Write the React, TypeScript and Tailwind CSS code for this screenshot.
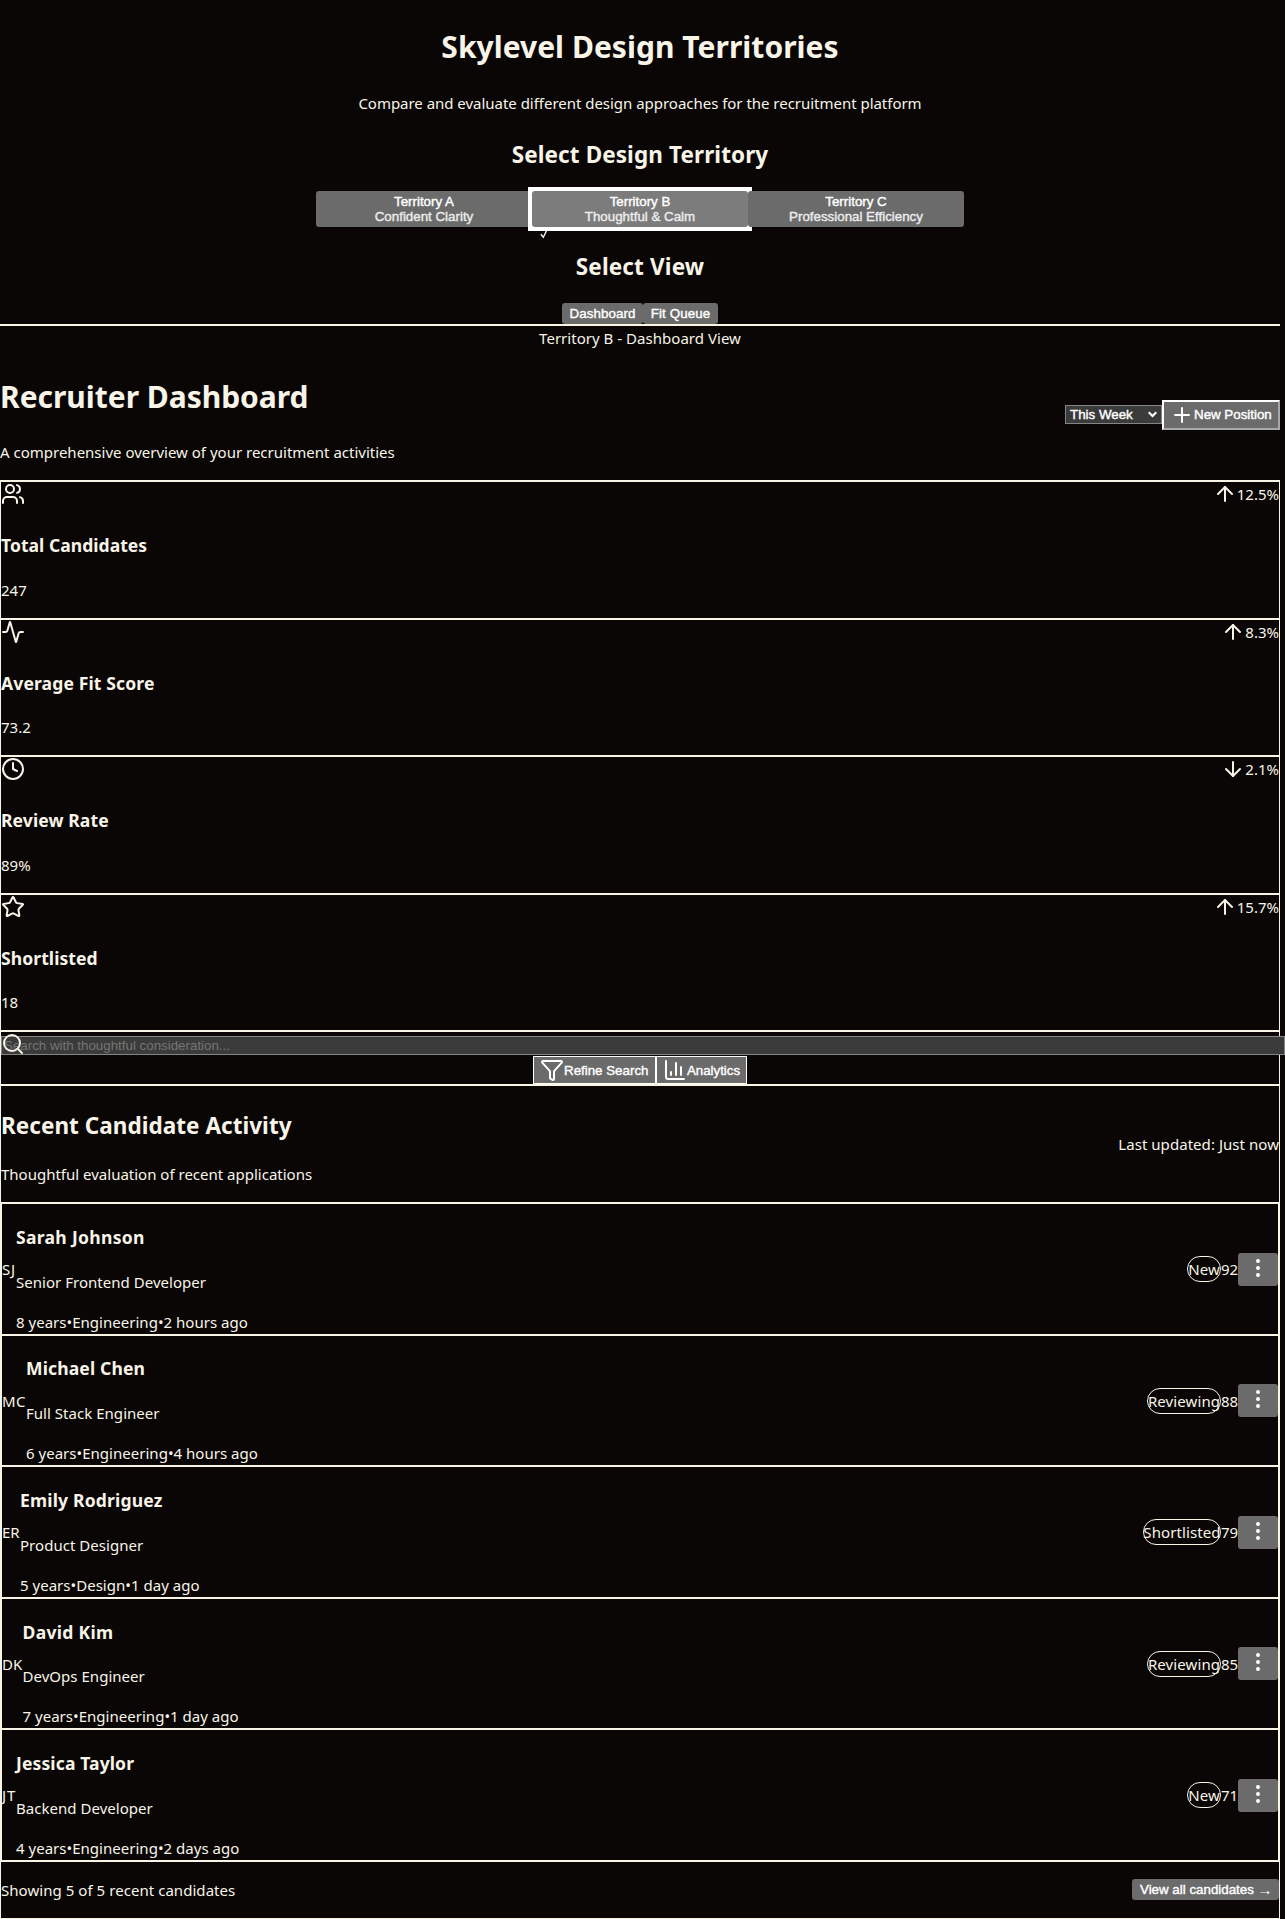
import React from "react";
import {
  Activity,
  ArrowDown,
  ArrowUp,
  ChartColumn,
  Clock,
  EllipsisVertical,
  Funnel,
  Plus,
  Search,
  Star,
  Users,
} from "lucide-react";

const territories = [
  { name: "Territory A", mood: "Confident Clarity", selected: false },
  { name: "Territory B", mood: "Thoughtful & Calm", selected: true },
  { name: "Territory C", mood: "Professional Efficiency", selected: false },
];

const stats = [
  { title: "Total Candidates", value: "247", change: "12.5%", up: true, Icon: Users, size: "h-[138px]", gap: "mt-[19px]", track: "tracking-[0.03px]" },
  { title: "Average Fit Score", value: "73.2", change: "8.3%", up: true, Icon: Activity, size: "h-[137px]", gap: "mt-[18px]", track: "tracking-[0.13px]" },
  { title: "Review Rate", value: "89%", change: "2.1%", up: false, Icon: Clock, size: "h-[138px]", gap: "mt-[19px]", track: "tracking-[0.1px]" },
  { title: "Shortlisted", value: "18", change: "15.7%", up: true, Icon: Star, size: "h-[137px]", gap: "mt-[18px]", track: "tracking-[0.08px]" },
];

const candidates = [
  { initials: "SJ", name: "Sarah Johnson", role: "Senior Frontend Developer", years: "8 years", team: "Engineering", when: "2 hours ago", status: "New", score: 92, row: "h-[132px]", top: "mt-[19px]", gap: "mt-[19px]", avatar: "w-[14px] tracking-[0.8px]", badge: "w-[34px]", nameTrack: "tracking-[0.3px]" },
  { initials: "MC", name: "Michael Chen", role: "Full Stack Engineer", years: "6 years", team: "Engineering", when: "4 hours ago", status: "Reviewing", score: 88, row: "h-[131px]", top: "mt-[18px]", gap: "mt-[19px]", avatar: "w-[24px] tracking-[0.4px]", badge: "w-[74px]", nameTrack: "tracking-[0.13px]" },
  { initials: "ER", name: "Emily Rodriguez", role: "Product Designer", years: "5 years", team: "Design", when: "1 day ago", status: "Shortlisted", score: 79, row: "h-[132px]", top: "mt-[19px]", gap: "mt-[19px]", avatar: "w-[18px]", badge: "w-[78px]", nameTrack: "tracking-[0.17px]" },
  { initials: "DK", name: "David Kim", role: "DevOps Engineer", years: "7 years", team: "Engineering", when: "1 day ago", status: "Reviewing", score: 85, row: "h-[131px]", top: "mt-[19px]", gap: "mt-[18px]", avatar: "w-[20.5px]", badge: "w-[74px]", nameTrack: "tracking-[0.3px]" },
  { initials: "JT", name: "Jessica Taylor", role: "Backend Developer", years: "4 years", team: "Engineering", when: "2 days ago", status: "New", score: 71, row: "h-[132px]", top: "mt-[19px]", gap: "mt-[19px]", avatar: "w-[14px] tracking-[0.8px]", badge: "w-[34px]", nameTrack: "tracking-[0.12px]" },
];

const control =
  "font-['Liberation_Sans',sans-serif] text-[13.333px] leading-[15px] text-white whitespace-nowrap [-webkit-text-stroke:0.4px]";

function Selector() {
  return (
    <header className="flex h-[326px] flex-col items-center border-b-2 border-[#f8f4e6]">
      <h1 className="mt-[23px] text-[30px] leading-[47px] font-bold tracking-[0.03px]">Skylevel Design Territories</h1>
      <p className="mt-[21px] tracking-[-0.025px]">Compare and evaluate different design approaches for the recruitment platform</p>
      <h2 className="mt-[22px] text-[22.5px] leading-[35px] font-bold tracking-[0.1px]">Select Design Territory</h2>
      <div className="mt-[19px] flex">
        {territories.map((t) => (
          <button
            key={t.name}
            className={`${control} relative h-9 w-[216px] rounded-[3px] py-[3px] text-center ${
              t.selected ? "bg-[#7c7c7c]" : "bg-[#6b6b6b]"
            }`}
          >
            {t.selected && (
              <>
                <span className="absolute -inset-1 -z-10 bg-white" />
                <span className="absolute top-0 -left-1 h-full w-1 bg-white" />
                <svg className="absolute top-10 left-2 h-[8px] w-[9px]" viewBox="0 0 9 8" fill="none" stroke="#f8f4e6" strokeWidth="1.4">
                  <path d="M0.8 3.2L3.3 6.2L6.7 -0.6" />
                </svg>
              </>
            )}
            <span className="block">{t.name}</span>
            <span className="block text-[#ececec]">{t.mood}</span>
          </button>
        ))}
      </div>
      <h2 className="mt-[22px] text-[22.5px] leading-[35px] font-bold tracking-[0.15px]">Select View</h2>
      <div className="mt-[19px] flex">
        <button className={`${control} h-[21px] w-[81px] rounded-[3px] bg-[#6b6b6b] tracking-[0.1px]`}>Dashboard</button>
        <button className={`${control} h-[21px] w-[75px] rounded-[3px] bg-[#6b6b6b] tracking-[0.1px]`}>Fit Queue</button>
      </div>
    </header>
  );
}

function DashboardHeader() {
  return (
    <div className="flex h-[130px] items-start justify-between">
      <div>
        <h1 className="mt-[23px] text-[30px] leading-[47px] font-bold tracking-[-0.03px]">Recruiter Dashboard</h1>
        <p className="mt-[20px]">A comprehensive overview of your recruitment activities</p>
      </div>
      <div className="mt-[50px] flex items-start">
        <div role="combobox" className={`${control} mt-[5px] flex h-[19px] w-[97px] items-center justify-between border border-[#858585] bg-[#3b3b3b] pr-[4px] pl-1`}>
          <span>This Week</span>
          <svg className="h-[7px] w-[9px]" viewBox="0 0 9 7" fill="none" stroke="white" strokeWidth="2">
            <path d="M0.7 1.2L4.5 5L8.3 1.2" />
          </svg>
        </div>
        <button className={`${control} flex h-[30px] w-[118px] items-start border-2 border-t-white border-r-[#a8a8a8] border-b-[#a8a8a8] border-l-white bg-[#6b6b6b] pt-px pl-1.5`}>
          <Plus className="size-6 shrink-0" />
          <span className="mt-1">New Position</span>
        </button>
      </div>
    </div>
  );
}

function Stats() {
  return (
    <section>
      {stats.map(({ title, value, change, up, Icon, size, gap, track }) => (
        <article key={title} className={`${size} border-t-2 border-[#f8f4e6]`}>
          <div className="flex justify-between">
            <Icon className="size-6" />
            <div className="flex">
              {up ? <ArrowUp className="size-6" /> : <ArrowDown className="size-6" />}
              <span>{change}</span>
            </div>
          </div>
          <h3 className={`mt-[25px] text-[17.55px] leading-[28px] font-bold ${track}`}>{title}</h3>
          <p className={gap}>{value}</p>
        </article>
      ))}
    </section>
  );
}

function SearchPanel() {
  return (
    <section className="relative h-[54px] border-t-2 border-[#f8f4e6] pt-1">
      <input
        placeholder="Search with thoughtful consideration..."
        className="block h-[19px] w-[1284px] border border-[#858585] bg-[#3b3b3b] px-0.5 font-['Liberation_Sans',sans-serif] text-[13.333px] leading-[15px] placeholder:text-[#757575] placeholder:opacity-100"
      />
      <Search className="absolute top-0 left-0 size-6" />
      <div className="mt-px flex justify-center">
        <button className={`${control} flex h-[28px] w-[123px] items-start border border-white bg-[#6b6b6b] pt-px pl-1.5`}>
          <Funnel className="size-6 shrink-0" />
          <span className="mt-[5px]">Refine Search</span>
        </button>
        <button className={`${control} flex h-[28px] w-[91px] items-start border border-white bg-[#6b6b6b] pt-px pl-1.5 tracking-[-0.03px]`}>
          <ChartColumn className="size-6 shrink-0" />
          <span className="mt-[5px]">Analytics</span>
        </button>
      </div>
    </section>
  );
}

function Candidates() {
  return (
    <div className="-mx-px border-x-2 border-[#f8f4e6]">
      {candidates.map((c) => (
        <article key={c.name} className={`${c.row} flex justify-between border-t-2 border-[#f8f4e6]`}>
          <div className="flex">
            <div className={`${c.avatar} pt-[53px]`}>{c.initials}</div>
            <div>
              <h3 className={`${c.top} text-[17.55px] leading-[28px] font-bold ${c.nameTrack}`}>{c.name}</h3>
              <p className={`${c.gap} tracking-[0.03px]`}>{c.role}</p>
              <div className="mt-4 flex tracking-[0.02px]">
                <span>{c.years}</span>
                <span>•</span>
                <span>{c.team}</span>
                <span>•</span>
                <span>{c.when}</span>
              </div>
            </div>
          </div>
          <div className={`flex items-start ${c.row === "h-[131px]" ? "pt-[48px]" : "pt-[49px]"}`}>
            <span className={`${c.badge} ${c.row === "h-[131px]" ? "mt-1" : "mt-[3px]"} flex h-[26px] justify-center rounded-full border border-[#f8f4e6] tracking-[0.1px]`}>
              {c.status}
            </span>
            <span className={`${c.row === "h-[131px]" ? "mt-[5px]" : "mt-1"} w-[17px]`}>{c.score}</span>
            <button className="flex h-[33px] w-10 justify-center rounded-[3px] bg-[#6b6b6b] pt-[3px] text-white">
              <EllipsisVertical className="size-6" />
            </button>
          </div>
        </article>
      ))}
    </div>
  );
}

export default function App() {
  return (
    <div className="isolate min-h-[1919px] overflow-hidden bg-[#090605] font-['Noto_Sans',sans-serif] text-[15px] leading-6 text-[#f8f4e8]">
      <main className="w-[1280px]">
        <Selector />
        <p className="text-center tracking-[0.03px]">Territory B - Dashboard View</p>
        <DashboardHeader />
        <div className="h-[1439px] border-x border-b border-[#f8f4e6]">
          <Stats />
          <SearchPanel />
          <section className="border-t-2 border-[#f8f4e6]">
            <div className="flex h-[116px] justify-between">
              <div>
                <h2 className="mt-[22px] text-[22.5px] leading-[35px] font-bold tracking-[0.04px]">Recent Candidate Activity</h2>
                <p className="mt-[19px]">Thoughtful evaluation of recent applications</p>
              </div>
              <span className="mt-[46px] tracking-[0.05px]">Last updated: Just now</span>
            </div>
            <Candidates />
            <footer className="flex h-[58px] items-start justify-between border-t-2 border-[#f8f4e6] pt-4">
              <span className="tracking-[0.05px]">Showing 5 of 5 recent candidates</span>
              <button className={`${control} mt-px flex h-[21px] w-[147px] rounded-[3px] bg-[#6b6b6b] pt-[3px] pl-2`}>
                View all candidates&nbsp;<span className="text-[15px] [-webkit-text-stroke:0px]">→</span>
              </button>
            </footer>
          </section>
        </div>
      </main>
    </div>
  );
}
